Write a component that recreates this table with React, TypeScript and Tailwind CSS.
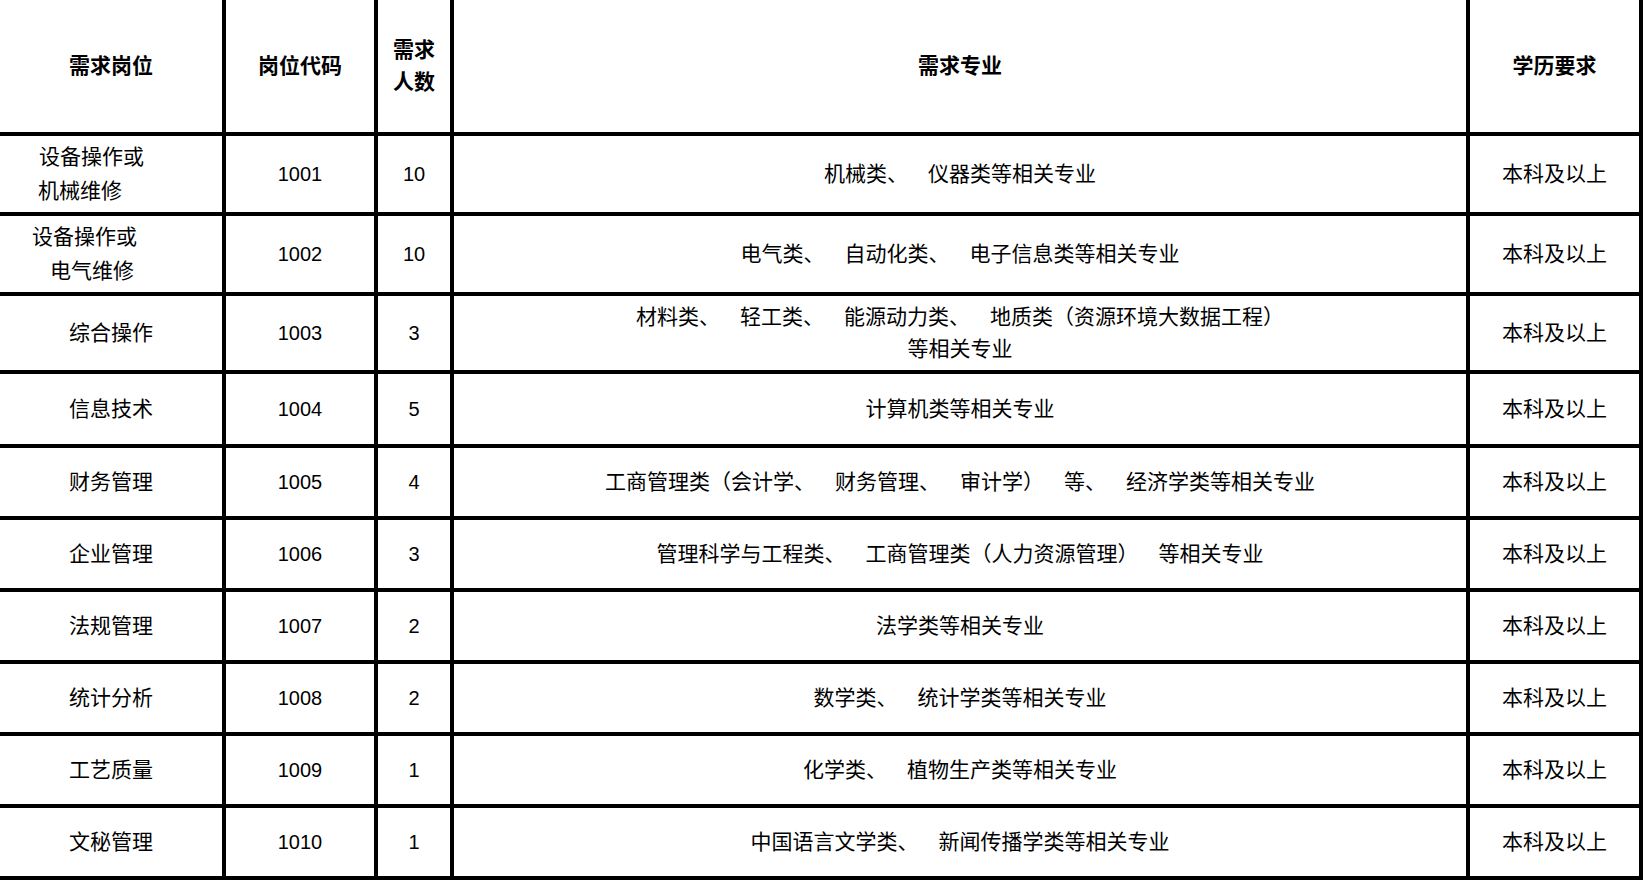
import { Fragment } from "react";

const font = {
  fontFamily: '"Liberation Sans", "Noto Sans CJK SC", sans-serif',
};

// the source puts a wide gap after 、 and ）, wider than a normal space
function gapped(text: string) {
  const parts = text.split(" ");
  return parts.map((p, i) => (
    <Fragment key={i}>
      {i > 0 && <span className="inline-block w-[20px]" />}
      {p}
    </Fragment>
  ));
}

type Row = {
  post: React.ReactNode;
  code: string;
  count: string;
  major: React.ReactNode;
};

const rows: Row[] = [
  {
    post: (
      <span className="block w-full text-left leading-[34px]">
        <span className="block pl-[39px]">设备操作或</span>
        <span className="block pl-[38px]">机械维修</span>
      </span>
    ),
    code: "1001",
    count: "10",
    major: gapped("机械类、 仪器类等相关专业"),
  },
  {
    post: (
      <span className="block w-full text-left leading-[34px]">
        <span className="block pl-[32px]">设备操作或</span>
        <span className="block pl-[50px]">电气维修</span>
      </span>
    ),
    code: "1002",
    count: "10",
    major: gapped("电气类、 自动化类、 电子信息类等相关专业"),
  },
  {
    post: "综合操作",
    code: "1003",
    count: "3",
    major: (
      <>
        {gapped("材料类、 轻工类、 能源动力类、 地质类（资源环境大数据工程）")}
        <br />
        等相关专业
      </>
    ),
  },
  { post: "信息技术", code: "1004", count: "5", major: "计算机类等相关专业" },
  {
    post: "财务管理",
    code: "1005",
    count: "4",
    major: gapped("工商管理类（会计学、 财务管理、 审计学） 等、 经济学类等相关专业"),
  },
  {
    post: "企业管理",
    code: "1006",
    count: "3",
    major: gapped("管理科学与工程类、 工商管理类（人力资源管理） 等相关专业"),
  },
  { post: "法规管理", code: "1007", count: "2", major: "法学类等相关专业" },
  { post: "统计分析", code: "1008", count: "2", major: gapped("数学类、 统计学类等相关专业") },
  { post: "工艺质量", code: "1009", count: "1", major: gapped("化学类、 植物生产类等相关专业") },
  {
    post: "文秘管理",
    code: "1010",
    count: "1",
    major: gapped("中国语言文学类、 新闻传播学类等相关专业"),
  },
];

const cell =
  "flex items-center justify-center text-center border-r-4 border-b-4 border-black";

export default function App() {
  return (
    <div className="w-[1644px] h-[880px] bg-white text-black overflow-hidden" style={font}>
      <div className="grid w-[1643px] grid-cols-[226px_152px_76px_1016px_173px] grid-rows-[136px_80px_80px_78px_74px_repeat(6,72px)] text-[21px] leading-[32px]">
        <div className={`${cell} font-bold`}>需求岗位</div>
        <div className={`${cell} font-bold`}>岗位代码</div>
        <div className={`${cell} font-bold`}>
          需求
          <br />
          人数
        </div>
        <div className={`${cell} font-bold`}>需求专业</div>
        <div className={`${cell} font-bold`}>学历要求</div>

        {rows.map((r) => (
          <div key={r.code} className="contents">
            <div className={cell}>{r.post}</div>
            <div className={`${cell} text-[20px]`}>{r.code}</div>
            <div className={`${cell} text-[20px]`}>{r.count}</div>
            <div className={cell}>
              <span>{r.major}</span>
            </div>
            <div className={cell}>本科及以上</div>
          </div>
        ))}
      </div>
    </div>
  );
}
